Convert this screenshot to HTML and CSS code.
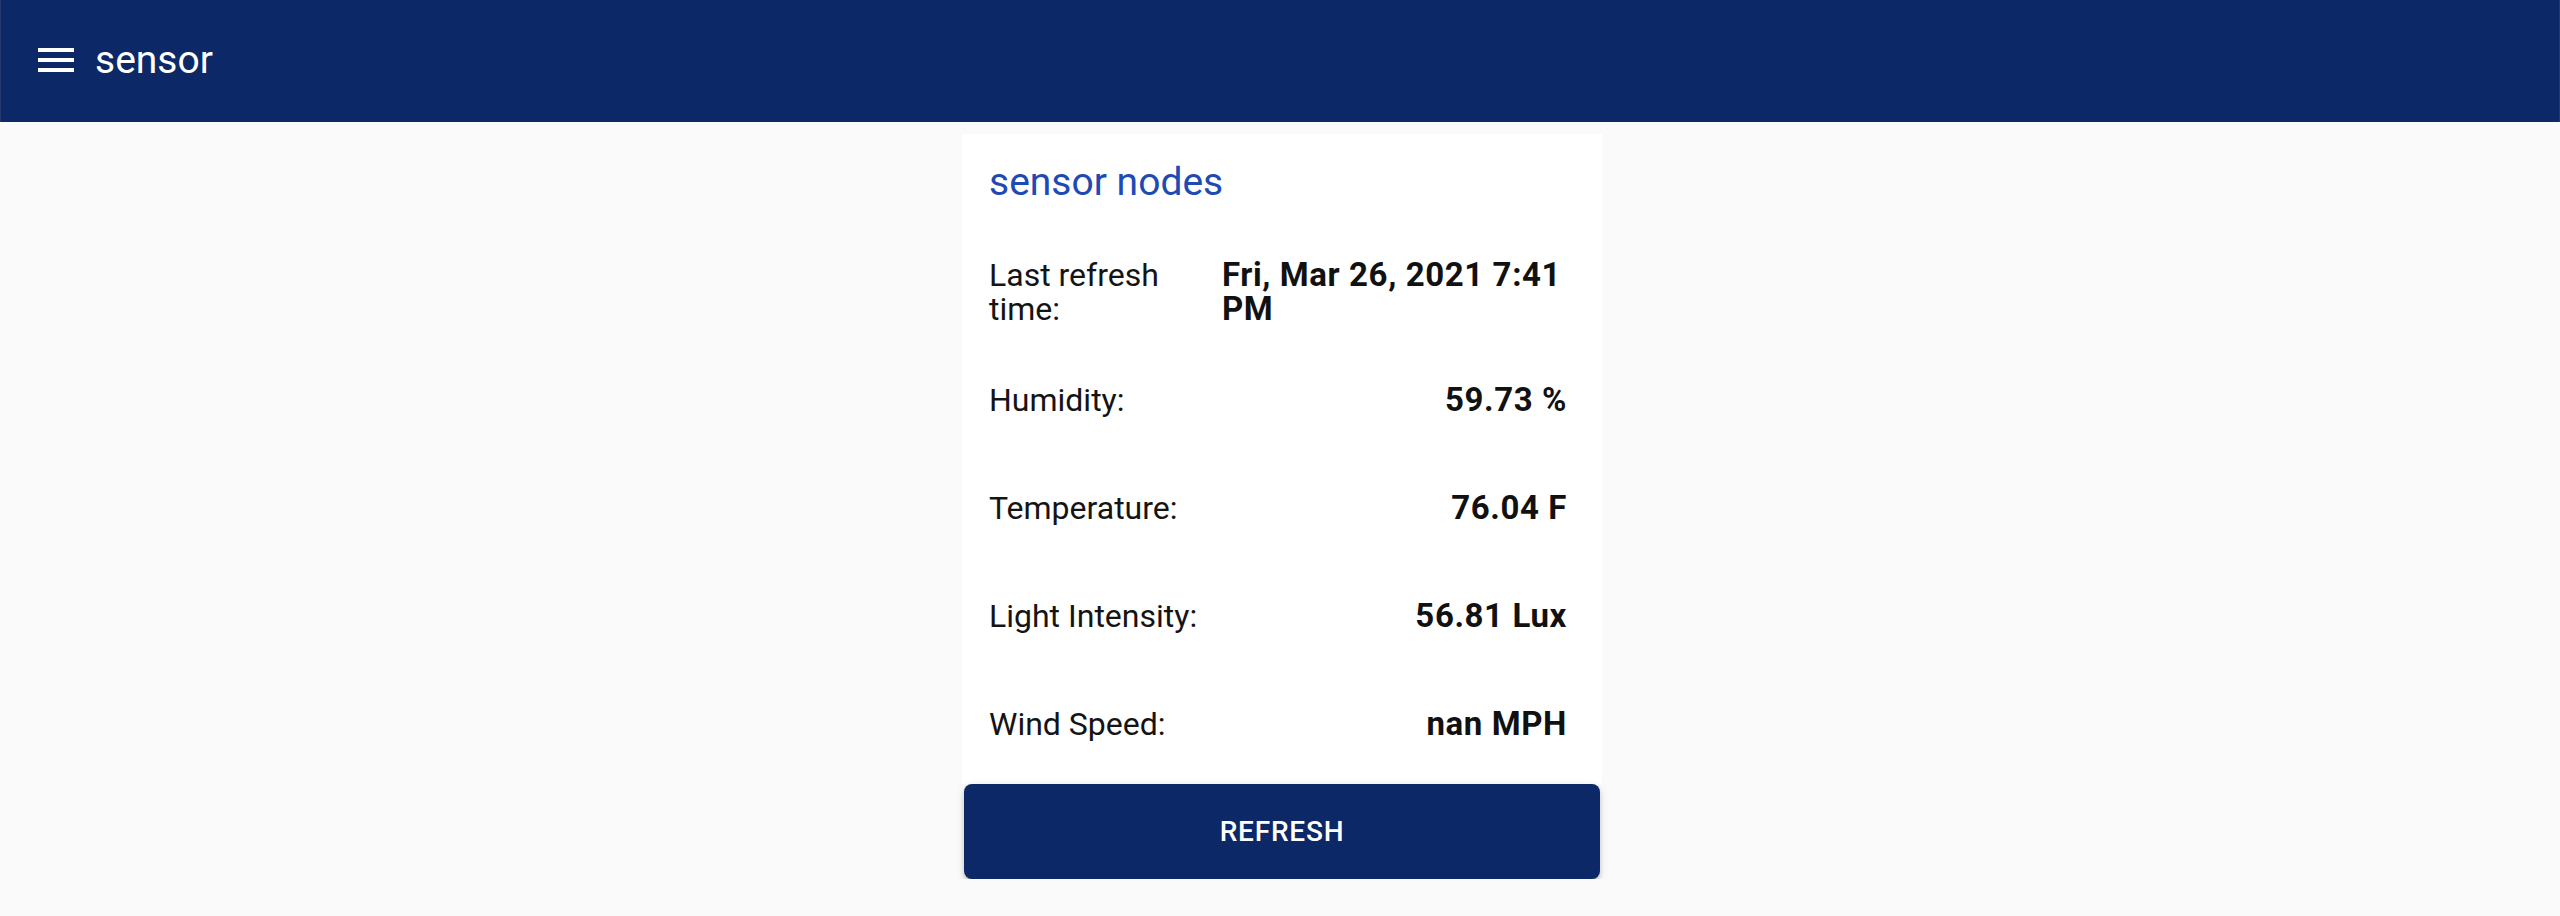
FILE: index.html
```html
<!DOCTYPE html>
<html lang="en">
<head>
<meta charset="utf-8">
<title>sensor</title>
<link rel="stylesheet" href="styles.css">
</head>
<body>
<header class="appbar">
  <button class="menu-btn" aria-label="menu">
    <svg viewBox="0 0 24 24" width="48" height="48"><path d="M3 18h18v-2H3v2zm0-5h18v-2H3v2zm0-7v2h18V6H3z"/></svg>
  </button>
  <h1 class="app-title">sensor</h1>
</header>
<main class="content">
  <section class="card">
    <h2 class="card-title">sensor nodes</h2>
    <div class="row row-refresh">
      <span class="label">Last refresh time:</span>
      <span class="value">Fri, Mar 26, 2021 7:41 PM</span>
    </div>
    <div class="row">
      <span class="label">Humidity:</span>
      <span class="value">59.73 %</span>
    </div>
    <div class="row">
      <span class="label">Temperature:</span>
      <span class="value">76.04 F</span>
    </div>
    <div class="row">
      <span class="label">Light Intensity:</span>
      <span class="value">56.81 Lux</span>
    </div>
    <div class="row">
      <span class="label">Wind Speed:</span>
      <span class="value">nan MPH</span>
    </div>
  </section>
  <button class="refresh-btn">Refresh</button>
</main>
</body>
</html>
```
FILE: styles.css
```css
* { box-sizing: border-box; }

html, body {
  margin: 0;
  padding: 0;
  background: #fafafa;
  font-family: Roboto, "Liberation Sans", Arial, sans-serif;
  color: #111111;
}

.appbar {
  height: 122px;
  background: #0c2866;
  display: flex;
  align-items: center;
  padding: 0 0 2px 32px;
  border-left: 1px solid #26396b;
  border-right: 1px solid #26396b;
}

.menu-btn {
  width: 48px;
  height: 48px;
  padding: 0;
  margin: 0 15px 0 -1px;
  border: 0;
  background: transparent;
  display: flex;
}

.menu-btn svg { fill: #ffffff; display: block; }

.app-title {
  margin: 0;
  font-size: 39px;
  line-height: 46px;
  font-weight: 400;
  color: #ffffff;
}

.content {
  display: flex;
  flex-direction: column;
  align-items: center;
  padding: 12px 0 0 4px;
}

.card {
  width: 640px;
  background: #ffffff;
  padding: 24px 35px 6px 27px;
}

.card-title {
  margin: 0 0 32px 0;
  font-size: 39px;
  line-height: 48px;
  font-weight: 400;
  color: #1d4ab4;
}

.row {
  height: 108px;
  display: flex;
  align-items: center;
  justify-content: space-between;
  font-size: 32px;
  line-height: 34px;
}

.label { font-weight: 400; color: #141414; }

.value {
  font-weight: 700;
  font-size: 33px;
  letter-spacing: 0.6px;
  color: #111111;
  text-align: right;
}

.row-refresh .label { width: 233px; flex: none; }

.row-refresh .value { flex: 1; text-align: left; }

.refresh-btn {
  width: 636px;
  height: 95px;
  border: 0;
  border-radius: 8px;
  background: #0c2866;
  color: #ffffff;
  font-family: Roboto, "Liberation Sans", Arial, sans-serif;
  font-size: 28px;
  font-weight: 500;
  letter-spacing: 0.8px;
  text-transform: uppercase;
  box-shadow: 0 6px 2px -4px rgba(0,0,0,0.2), 0 4px 4px 0 rgba(0,0,0,0.14), 0 2px 10px 0 rgba(0,0,0,0.12);
}
```
